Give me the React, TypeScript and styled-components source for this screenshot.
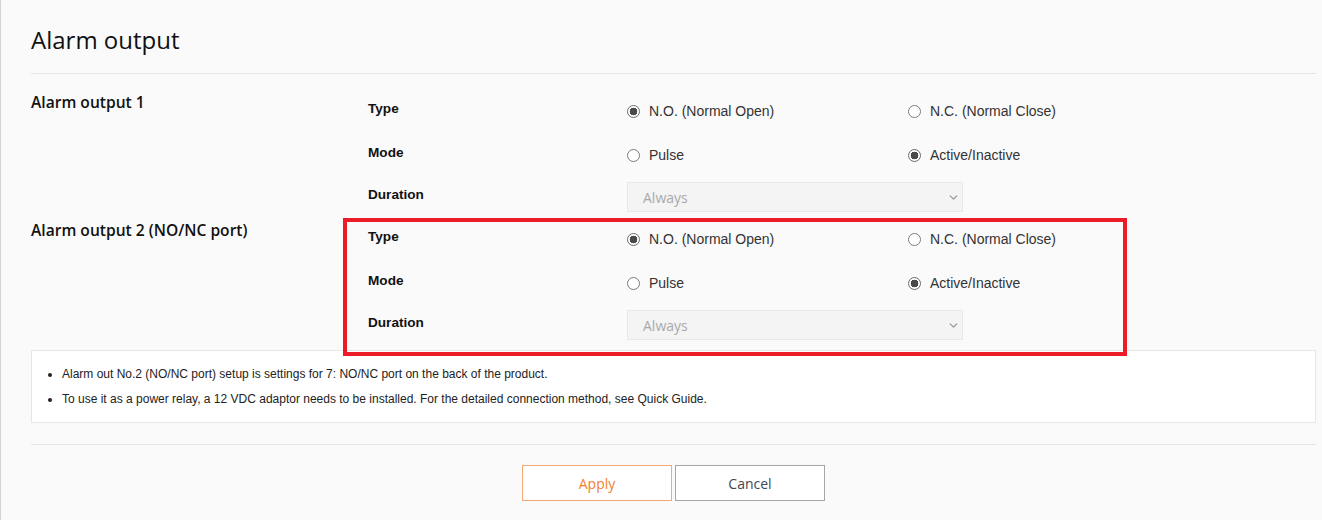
import styled, { createGlobalStyle } from "styled-components";
import { ChevronDown } from "lucide-react";

const GlobalStyle = createGlobalStyle`
  body {
    margin: 0;
    background: #fafafa;
  }
`;

const Page = styled.div`
  position: relative;
  min-height: 520px;
  box-sizing: border-box;
  padding: 0 6px 0 30px;
  border-left: 1px solid #d2d2d2;
  background: #fafafa;
`;

const Title = styled.h1`
  margin: 0;
  padding: 23px 0 16px;
  font-family: "Open Sans", sans-serif;
  font-size: 24px;
  font-weight: 400;
  line-height: 34px;
  color: #111;
  border-bottom: 1px solid #e6e6e6;
`;

const Sections = styled.div`
  padding-top: 15px;
`;

const Section = styled.div`
  display: grid;
  grid-template-columns: 337px 1fr;
`;

const SectionLabel = styled.div`
  padding-top: 3px;
  font-family: "Open Sans", sans-serif;
  font-size: 15.6px;
  font-weight: 600;
  line-height: 20px;
  color: #111;
`;

const Fields = styled.div`
  position: relative;
`;

const Highlight = styled.div`
  position: absolute;
  left: -25px;
  top: 1px;
  width: 784px;
  height: 138px;
  box-sizing: border-box;
  border: 4px solid #ec1c26;
  pointer-events: none;
  z-index: 2;
`;

const Row = styled.div<{ $short?: boolean }>`
  display: grid;
  grid-template-columns: 259px 281px 1fr;
  align-items: center;
  height: ${(p) => (p.$short ? "40px" : "44px")};
`;

const FieldLabel = styled.div`
  margin-bottom: 6px;
  font-family: "Liberation Sans", Arial, sans-serif;
  font-size: 13.6px;
  font-weight: 700;
  color: #111;
`;

const Option = styled.label`
  display: flex;
  align-items: center;
  font-family: "Liberation Sans", Arial, sans-serif;
  font-size: 14px;
  color: #333;
`;

const Radio = styled.input`
  appearance: none;
  margin: 0 9px 0 0;
  width: 13px;
  height: 13px;
  box-sizing: border-box;
  border: 1px solid #7a7a7a;
  border-radius: 50%;
  background: #fff;

  &:checked {
    border-color: #6a6a6a;
    background: radial-gradient(circle, #4a4a4a 0 3.6px, #fff 4.1px);
  }
`;

const SelectWrap = styled.div`
  position: relative;
  grid-column: 2 / span 2;
  width: 336px;
  height: 30px;
`;

const Select = styled.select`
  appearance: none;
  width: 100%;
  height: 100%;
  box-sizing: border-box;
  padding: 0 30px 0 15px;
  border: 1px solid #e8e8e8;
  border-radius: 0;
  background: #f4f4f4;
  font-family: "Open Sans", sans-serif;
  font-size: 14px;
  color: #a9a9a9;
  opacity: 1;
`;

const Chevron = styled(ChevronDown)`
  position: absolute;
  right: 3px;
  top: 9px;
  width: 13px;
  height: 13px;
  color: #9a9a9a;
  pointer-events: none;
`;

const Notes = styled.ul`
  margin: 5px 0 0;
  padding: 11px 0 10px 30px;
  background: #fff;
  border: 1px solid #e6e6e6;
  list-style: disc;
  font-family: "Liberation Sans", Arial, sans-serif;
  font-size: 12px;
  color: #222;

  li {
    line-height: 25px;
  }
`;

const Footer = styled.div`
  display: flex;
  justify-content: center;
  gap: 3px;
  margin-top: 21px;
  padding-top: 20px;
  border-top: 1px solid #e6e6e6;
`;

const Button = styled.button<{ $primary?: boolean }>`
  width: 150px;
  height: 36px;
  background: #fff;
  border: 1px solid ${(p) => (p.$primary ? "#f5a873" : "#a6a6a6")};
  color: ${(p) => (p.$primary ? "#f4802f" : "#3e4752")};
  font-family: "Open Sans", sans-serif;
  font-size: 14px;
  cursor: pointer;
`;

interface IOutput {
  id: number;
  label: string;
  highlight?: boolean;
}

const outputs: IOutput[] = [
  { id: 1, label: "Alarm output 1" },
  { id: 2, label: "Alarm output 2 (NO/NC port)", highlight: true },
];

function OutputSection({ id, label, highlight }: IOutput) {
  return (
    <Section>
      <SectionLabel>{label}</SectionLabel>
      <Fields>
        {highlight && <Highlight />}
        <Row>
          <FieldLabel>Type</FieldLabel>
          <Option>
            <Radio type="radio" name={`type${id}`} defaultChecked />
            N.O. (Normal Open)
          </Option>
          <Option>
            <Radio type="radio" name={`type${id}`} />
            N.C. (Normal Close)
          </Option>
        </Row>
        <Row>
          <FieldLabel>Mode</FieldLabel>
          <Option>
            <Radio type="radio" name={`mode${id}`} />
            Pulse
          </Option>
          <Option>
            <Radio type="radio" name={`mode${id}`} defaultChecked />
            Active/Inactive
          </Option>
        </Row>
        <Row $short>
          <FieldLabel>Duration</FieldLabel>
          <SelectWrap>
            <Select disabled defaultValue="always">
              <option value="always">Always</option>
            </Select>
            <Chevron strokeWidth={2.5} />
          </SelectWrap>
        </Row>
      </Fields>
    </Section>
  );
}

export default function App() {
  return (
    <>
      <GlobalStyle />
      <Page>
        <Title>Alarm output</Title>
        <Sections>
          {outputs.map((o) => (
            <OutputSection key={o.id} {...o} />
          ))}
        </Sections>
        <Notes>
          <li>Alarm out No.2 (NO/NC port) setup is settings for 7: NO/NC port on the back of the product.</li>
          <li>
            To use it as a power relay, a 12 VDC adaptor needs to be installed. For the detailed connection method, see
            Quick Guide.
          </li>
        </Notes>
        <Footer>
          <Button $primary>Apply</Button>
          <Button>Cancel</Button>
        </Footer>
      </Page>
    </>
  );
}
